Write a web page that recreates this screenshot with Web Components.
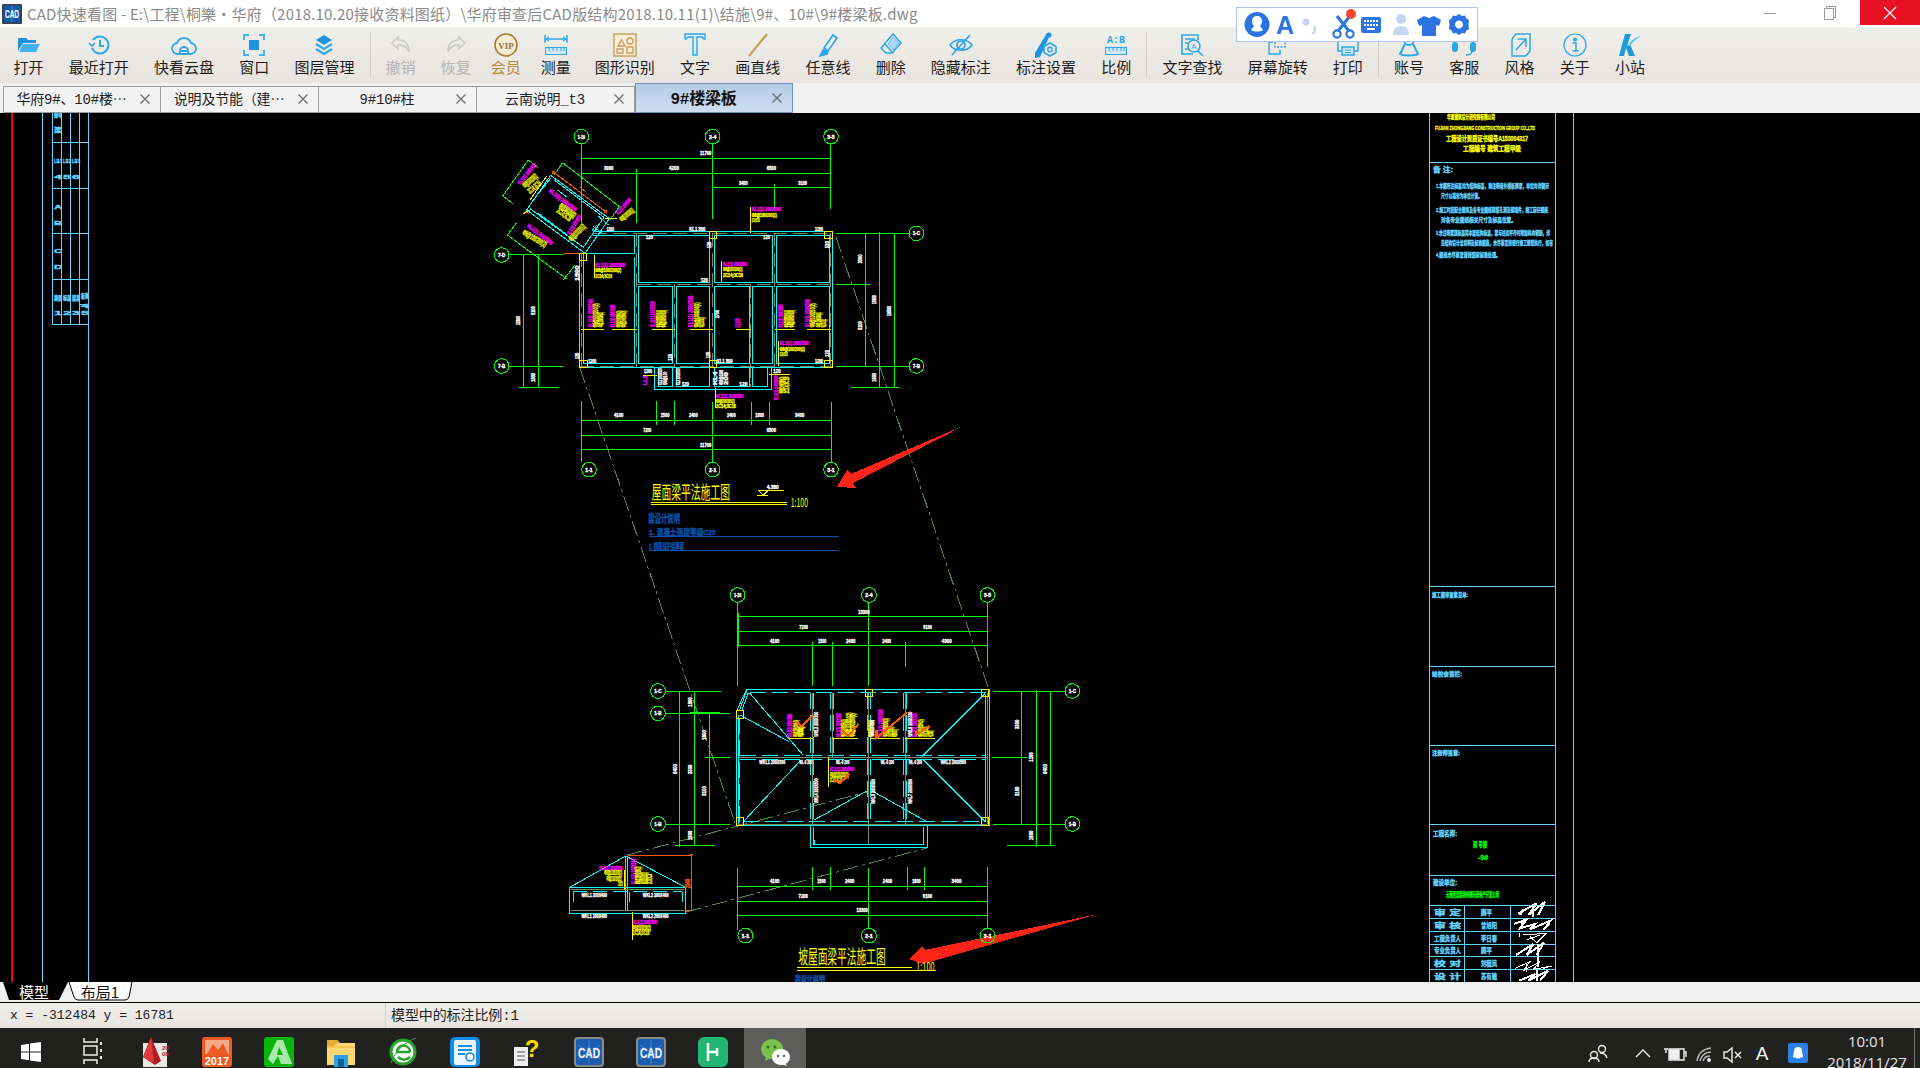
<!DOCTYPE html>
<html>
<head>
<meta charset="utf-8">
<title>CAD快速看图</title>
<style>
html, body { margin: 0; padding: 0; background: #000; overflow: hidden; }
</style>
</head>
<body>
<app-window></app-window>
<script>
const CJK = '"Noto Sans CJK SC", "Liberation Sans", sans-serif';

// small helper, every element here is just a template in an open shadow root
function comp(tag, markup) {
    const template = document.createElement('template');
    template.innerHTML = markup;
    customElements.define(tag, class extends HTMLElement {
        constructor() {
            super();
            this.attachShadow({ mode: 'open' });
            this.shadowRoot.appendChild(template.content.cloneNode(true));
        }
    });
}

comp('title-bar', `
    <style>
        :host { display: flex; align-items: center; height: 27px; background: #fff; position: relative; flex: none; }
        .logo { margin: 0 5px 0 2px; flex: none; }
        .name { font: 15px ${CJK}; color: #8a8a8a; white-space: nowrap; flex: 1; letter-spacing: 0.2px; }
        .btn { width: 60px; height: 25px; align-self: flex-start; display: flex; align-items: center; justify-content: center; flex: none; }
        .btn.close { background: #e81123; }
        .ime { position: absolute; left: 1236px; top: 7px; width: 240px; height: 33px; background: #fff; border: 1px solid #a9c6f2; z-index: 5; display: block; }
    </style>
    <svg class="logo" width="20" height="20" viewBox="0 0 20 20">
        <rect width="20" height="20" rx="1" fill="#3a3f46"/>
        <rect x="1.5" y="1.5" width="17" height="17" fill="#1358a8"/>
        <path d="M10 2v16M3 6l14 8M17 6L3 14" stroke="#3c86d0" fill="none"/>
        <text x="10" y="14" text-anchor="middle" font-family="Liberation Sans" font-weight="700" font-size="10" textLength="14" lengthAdjust="spacingAndGlyphs" fill="#fff">CAD</text>
    </svg>
    <div class="name">CAD快速看图 - E:\\工程\\桐樂·华府（2018.10.20接收资料图纸）\\华府审查后CAD版结构2018.10.11(1)\\结施\\9#、10#\\9#楼梁板.dwg</div>
    <div class="btn"><svg width="14" height="14"><path d="M1 7.5h12" stroke="#999"/></svg></div>
    <div class="btn"><svg width="14" height="16"><path d="M3.5 3.5V1.5h9v11h-2M1.5 3.5h9v11h-9z" stroke="#999" fill="#fff"/></svg></div>
    <div class="btn close"><svg width="14" height="14"><path d="M1 1l12 12M13 1L1 13" stroke="#fff" stroke-width="1.2"/></svg></div>
    <svg class="ime" viewBox="0 0 240 33">
        <circle cx="20" cy="16.500" r="12.500" fill="#2b74e2"/>
        <path fill="#fff" d="M20 8c3.500 0 5 2.500 5 5 0 2-1 4-2 5l3 4c-2 2-10 2-12 0l3-4c-1-1-2-3-2-5 0-2.500 1.500-5 5-5z"/>
        <text x="39" y="26" font-family="Liberation Sans" font-weight="700" font-size="25" fill="#2b74e2">A</text>
        <circle cx="69" cy="14" r="3.5" fill="#c3d7f5"/><path d="M77 18c2 3 1 6-2 8" stroke="#c3d7f5" stroke-width="2.5" fill="none"/>
        <circle cx="100" cy="26" r="3.6" fill="none" stroke="#2b74e2" stroke-width="2.2"/><circle cx="113" cy="26" r="3.6" fill="none" stroke="#2b74e2" stroke-width="2.2"/>
        <path d="M101 23L113 8M112 23L100 8" stroke="#2b74e2" stroke-width="3"/>
        <circle cx="114" cy="6" r="5" fill="#f4492e"/>
        <rect x="124" y="9" width="20" height="16" rx="2" fill="#2b74e2"/>
        <path d="M127 13h14M127 17h14" stroke="#fff" stroke-width="2" stroke-dasharray="2 1"/><path d="M130 21h8" stroke="#fff" stroke-width="2"/>
        <circle cx="164" cy="11" r="5" fill="#c3d7f5"/><path d="M156 27c0-6 3-9 8-9s8 3 8 9z" fill="#c3d7f5"/>
        <path fill="#2b74e2" d="M187 8l5 2 5-2 7 4-2 6-3-1v11h-14V17l-3 1-2-6z"/>
        <path fill="#2b74e2" fill-rule="evenodd" d="M222 6l3 2 3-.500 1.500 3 2.500 1.500-.500 4.500.500 4.500-2.500 1.500-1.500 3-3-.500-3 2-3-2-3 .500-1.500-3-2.500-1.500.500-4.500-.500-4.500 2.500-1.500 1.500-3 3 .500zM222 12.500a4 4 0 1 0 .01 0z"/>
    </svg>
`);

comp('tool-item', `
    <style>
        :host { display: flex; flex-direction: column; align-items: center; padding: 5px 12.6px 0; font: 15px/20px ${CJK}; color: #1c1c1c; white-space: nowrap; flex: none; }
        :host([off]) { color: #b4b4b4; }
        :host([gold]) { color: #b88a3e; padding: 5px 10px 0 7.4px; }
        :host([tight]) { padding: 5px 11.400px 0 10px; }
        .ico { height: 25px; display: flex; align-items: center; justify-content: center; }
    </style>
    <div class="ico"><slot></slot></div>
    <slot name="label"></slot>
`);

comp('tool-sep', `
    <style>
        :host { display: block; width: 1px; height: 46px; margin: 5px 2.500px 0; background: #cfcdc9; flex: none; }
    </style>
`);

const B = '#2ea6e8';
comp('tool-bar', `
    <style>
        :host { display: flex; height: 56px; padding-left: 1px; background: linear-gradient(#efefeb, #e8e3de); flex: none; }
    </style>
    <tool-item><svg width="22" height="16" viewBox="0 0 22 16"><path fill="#1f93de" d="M0 1h8l2 2h8v3H5L0 14z"/><path fill="#43b2f2" d="M5 7h17l-4 8H1z"/></svg><span slot="label">打开</span></tool-item>
    <tool-item><svg width="22" height="22" viewBox="0 0 22 22" fill="none" stroke="${B}" stroke-width="2"><path d="M5 6a8.500 8.500 0 1 1-1 8"/><path d="M12 6v6h4"/><path d="M1 9l3 3 3-3" stroke-width="1.600"/></svg><span slot="label">最近打开</span></tool-item>
    <tool-item><svg width="26" height="22" viewBox="0 0 26 22" fill="none" stroke="${B}" stroke-width="1.800"><path d="M7 20a5.500 5.500 0 0 1-1-11A7.500 7.500 0 0 1 20 9a5.500 5.500 0 0 1-1 11z"/><path d="M9 20v-3a4 4 0 0 1 8 0v3M9 17h8"/></svg><span slot="label">快看云盘</span></tool-item>
    <tool-item><svg width="22" height="22" viewBox="0 0 22 22"><rect x="6" y="6" width="10" height="10" fill="#1f93de"/><path d="M1 6V1h5M16 1h5v5M21 16v5h-5M6 21H1v-5" fill="none" stroke="#43b2f2" stroke-width="2"/></svg><span slot="label">窗口</span></tool-item>
    <tool-item><svg width="20" height="22" viewBox="0 0 20 22"><path fill="#1f93de" d="M10 1l8 5-8 5-8-5z"/><path d="M2 10l8 5 8-5M2 15l8 5 8-5" fill="none" stroke="#2ea6e8" stroke-width="2.200"/></svg><span slot="label">图层管理</span></tool-item>
    <tool-sep></tool-sep>
    <tool-item off><svg width="22" height="20" viewBox="0 0 22 20"><path d="M8 2L2 8l6 6v-4c5 0 8 1 11 7 0-8-4-12-11-12z" fill="none" stroke="#c9c9c9" stroke-width="1.500"/></svg><span slot="label">撤销</span></tool-item>
    <tool-item off><svg width="22" height="20" viewBox="0 0 22 20"><path d="M14 2l6 6-6 6v-4c-5 0-8 1-11 7 0-8 4-12 11-12z" fill="none" stroke="#c9c9c9" stroke-width="1.500"/></svg><span slot="label">恢复</span></tool-item>
    <tool-item gold><svg width="24" height="24" viewBox="0 0 24 24"><circle cx="12" cy="12" r="11" fill="#f6ecd6" stroke="#a87c2e" stroke-width="1.600"/><text x="12" y="15.500" text-anchor="middle" font-family="Liberation Serif" font-weight="700" font-size="9" fill="#9c7226">VIP</text></svg><span slot="label">会员</span></tool-item>
    <tool-item tight><svg width="24" height="22" viewBox="0 0 24 22" fill="none" stroke="${B}"><path d="M1 1v8M23 1v8M2 5h20" stroke-width="1.400"/><path d="M5 3L2 5l3 2M19 3l3 2-3 2" stroke-width="1.200"/><rect x="1.500" y="13.500" width="21" height="7" fill="#cfe8f7"/><path d="M5 14v3M9 14v3M13 14v3M17 14v3M20 14v3"/></svg><span slot="label">测量</span></tool-item>
    <tool-item><svg width="24" height="24" viewBox="0 0 24 24" fill="none" stroke="#c59f5c" stroke-width="1.400"><rect x="1" y="1" width="22" height="22" fill="#f7edd9"/><path d="M5 13l3.500-6 3.500 6z"/><circle cx="17" cy="8" r="3"/><rect x="14" y="14" width="6" height="6"/><rect x="4" y="16" width="6" height="4"/></svg><span slot="label">图形识别</span></tool-item>
    <tool-item><svg width="22" height="24" viewBox="0 0 22 24"><path d="M1 1h20v5h-1l-2-2h-5v18h-4V4H4L2 6H1z" fill="#d8f0fc" stroke="${B}" stroke-width="1.400"/></svg><span slot="label">文字</span></tool-item>
    <tool-item><svg width="20" height="24" viewBox="0 0 20 24"><path d="M1 23L19 1" stroke="#c49b52" stroke-width="2"/></svg><span slot="label">画直线</span></tool-item>
    <tool-item><svg width="20" height="24" viewBox="0 0 20 24" fill="none" stroke="${B}" stroke-width="1.600"><path d="M6 15L15 2l4 3-9 13z"/><path d="M5 17l-3 6 7-2 1-3z" fill="${B}"/></svg><span slot="label">任意线</span></tool-item>
    <tool-item><svg width="22" height="24" viewBox="0 0 22 24" fill="none" stroke="${B}" stroke-width="1.500"><path d="M13 1l8 9-9 10H6l-5-5z"/><path d="M5 11l8 9"/><path d="M13 4l6 6-6 7-5-6z" fill="#a9d9f3" stroke-width=".6"/></svg><span slot="label">删除</span></tool-item>
    <tool-item><svg width="24" height="22" viewBox="0 0 24 22" fill="none" stroke="${B}" stroke-width="1.700"><path d="M1 11c5-7 17-7 22 0-5 7-17 7-22 0z"/><circle cx="12" cy="11" r="4"/><path d="M3 21L21 1"/></svg><span slot="label">隐藏标注</span></tool-item>
    <tool-item><svg width="24" height="26" viewBox="0 0 24 26"><path fill="#1f93de" d="M13 1l3 2L6 25l-5 1 0-5z"/><circle cx="15" cy="3" r="2.500" fill="#1f93de"/><path d="M16 11l6 3.500v6L16 24l-6-3.500v-6z" fill="none" stroke="${B}" stroke-width="1.600"/><circle cx="16" cy="17.500" r="2.200" fill="none" stroke="${B}" stroke-width="1.400"/></svg><span slot="label">标注设置</span></tool-item>
    <tool-item><svg width="24" height="24" viewBox="0 0 24 24" fill="none" stroke="${B}"><text x="12" y="10" text-anchor="middle" font-family="Liberation Mono" font-weight="700" font-size="10" fill="${B}" stroke="none">A:B</text><rect x="1.500" y="14.500" width="21" height="7" fill="#cfe8f7"/><path d="M5 15v3M9 15v3M13 15v3M17 15v3M20 15v3"/></svg><span slot="label">比例</span></tool-item>
    <tool-sep></tool-sep>
    <tool-item><svg width="24" height="24" viewBox="0 0 24 24" fill="none" stroke="${B}" stroke-width="1.600"><path d="M18 7V2H2v19h11"/><path d="M5 6h10M5 10h3M5 16h3"/><circle cx="14" cy="13" r="6"/><path d="M18 18l5 5"/><text x="14" y="16" text-anchor="middle" font-family="Liberation Sans" font-size="8" fill="${B}" stroke="none">A</text></svg><span slot="label">文字查找</span></tool-item>
    <tool-item><svg width="24" height="24" viewBox="0 0 24 24" fill="none" stroke="${B}" stroke-width="1.400"><path d="M7 9H3v12h11v-4"/><path d="M9 2h10v12H9z" stroke-dasharray="2 1.500"/></svg><span slot="label">屏幕旋转</span></tool-item>
    <tool-item><svg width="24" height="24" viewBox="0 0 24 24" fill="none" stroke="${B}" stroke-width="1.500"><path d="M6 8V2h12v6"/><path d="M5 18H2V8h20v10h-3"/><rect x="6" y="14" width="12" height="8" fill="#cfe8f7"/><path d="M9 17h6M9 19.500h6" stroke-width="1"/></svg><span slot="label">打印</span></tool-item>
    <tool-sep></tool-sep>
    <tool-item><svg width="22" height="24" viewBox="0 0 22 24" fill="none" stroke="${B}" stroke-width="2"><circle cx="11" cy="7" r="5"/><path d="M7 11L2 21c3 2 15 2 18 0l-5-10"/></svg><span slot="label">账号</span></tool-item>
    <tool-item><svg width="24" height="24" viewBox="0 0 24 24" fill="none" stroke="${B}" stroke-width="2"><path d="M3 15V10a9 9 0 0 1 18 0v5"/><rect x="1" y="10" width="4" height="8" rx="2" fill="${B}"/><rect x="19" y="10" width="4" height="8" rx="2" fill="${B}"/><path d="M20 18c0 3-3 4-6 4" stroke-width="1.500"/></svg><span slot="label">客服</span></tool-item>
    <tool-item><svg width="24" height="24" viewBox="0 0 24 24" fill="none" stroke="${B}" stroke-width="1.500"><path d="M5 6v17h14"/><path d="M5 6L9 1h14v17l-4 5"/><path d="M9 17L19 6M11 6h8v8"/></svg><span slot="label">风格</span></tool-item>
    <tool-item><svg width="24" height="24" viewBox="0 0 24 24" fill="none" stroke="${B}" stroke-width="1.200"><circle cx="12" cy="12" r="11"/><circle cx="12" cy="6.500" r="1.400" fill="${B}"/><path d="M9.500 10H13v8M9.500 18h6" stroke-width="1.500"/></svg><span slot="label">关于</span></tool-item>
    <tool-item><svg width="22" height="24" viewBox="0 0 22 24"><path fill="#1d9ad8" d="M6 1h6L8 13l3-2 5 12h-6l-3-8-2 8H0z"/><path fill="#63c8f2" d="M9 13C12 7 16 4 22 3c-5 3-8 6-11 10z"/></svg><span slot="label">小站</span></tool-item>
`);

comp('doc-tab', `
    <style>
        :host { display: flex; align-items: center; box-sizing: border-box; width: 158px; height: 27px; margin-top: 3px; padding: 0 9px 3px 0; background: #f2f2f2; border: 1px solid #9b9b9b; border-width: 1px 1px 1px 0; font: 14px "Liberation Mono", ${CJK}; color: #222; flex: none; }
        :host([first]) { border-left-width: 1px; }
        :host([active]) { height: 30px; margin-top: 0; background: linear-gradient(#b4cbe6, #cfdef0); border: 1px solid #6f94c4; font-size: 16px; font-weight: 700; color: #111; }
        .t { flex: 1; text-align: center; white-space: nowrap; letter-spacing: -0.2px; }
        svg { margin-top: 2px; }
    </style>
    <div class="t"><slot></slot></div>
    <svg width="12" height="12"><path d="M1.500 1.500l9 9M10.500 1.500l-9 9" stroke="#6b6b6b" stroke-width="1.200"/></svg>
`);

comp('tab-strip', `
    <style>
        :host { display: flex; height: 30px; padding-left: 3px; background: #f0f0f0; flex: none; }
    </style>
    <doc-tab first>华府9#、10#楼⋯</doc-tab>
    <doc-tab>说明及节能（建⋯</doc-tab>
    <doc-tab>9#10#柱</doc-tab>
    <doc-tab>云南说明_t3</doc-tab>
    <doc-tab active>9#楼梁板</doc-tab>
`);

// drawing text helpers: x, y, string, colour, length, size, rotation
const T = (x, y, s, c, len, size = 17, rot = 0) =>
    `<text x="${x}" y="${y}" fill="${c}" stroke="${c}" font-size="${size}"${len ? ` textLength="${len}" lengthAdjust="spacingAndGlyphs"` : ''}${rot ? ` transform="rotate(${rot} ${x} ${y})"` : ''}>${s}</text>`;
const V = (x, y, s, c, len, size = 17) => T(x, y, s, c, len, size, -90);
const W = '#fff', Y = '#ff0', M = '#f0f', G = '#0f0', C = '#0ff', O = '#ff5a00', L = '#66d4ff', K = '#0a50a8';
const ring = (list) => list.map(p => `<circle cx="${p[0]}" cy="${p[1]}" r="22"/>`).join('');
const box = (list) => list.map(p => `<rect x="${p[0]}" y="${p[1]}" width="22" height="22"/>`).join('');
const bubbleText = (list) => list.map(p => T(p[0] - 11, p[1] + 6, p[2], W, 22, 15)).join('');
const beam = 'KL1(1) 200X500', rebar = 'Φ8@100/200(2)', bars = '2C14;3C16';
// a reinforcement stack: magenta label then yellow rows, all standing upright
const stack = (x, yb, rows) => rows.map((r, i) => V(x + i * 16, yb, i ? rebar : beam, i ? Y : M, r, i ? 22 : 20)).join('');

const plan1 = `<g class="z" transform="translate(480 110) scale(.33333)">
    <g stroke="${G}">${ring([[304,80],[698,80],[1053,80],[65,435],[65,768],[1309,370],[1309,768]])}
        <path d="M304 145H1053M304 190H1053M697 232H1053M304 102V340M697 102V326M1053 102V296M470 178V340M883 222V296"/>
        <path d="M88 435H250M88 769H250M118 832H236M130 435V832M175 435V835"/>
        <path d="M1068 370H1287M1068 769H1287M1068 523H1170M1113 832H1256M1156 370V769M1198 365V832M1243 370V832"/>
        <path d="M145 150L68 258L98 280M145 150L175 175M248 158L418 290L390 330M248 158L222 195M82 375L110 338M82 375L262 508M250 510L285 465"/>
    </g>
    <g stroke="#7d8a62"><path d="M340 370H1058M300 770H1056M470 370V770M697 370V770M883 370V770M1053 370V770M470 523H1053M583 523V770M813 523V830M305 430V770" stroke-dasharray="14 6"/></g>
    <g stroke="${C}">
        <path d="M338 364H1058V772H298V430"/><path d="M338 376H465V430H310V760H465V440M475 376H690V518H475zM704 376H878V518H704zM889 376H1048V518H889z"/>
        <path d="M475 530H578V760H475zM589 530H690V760H589zM704 530H808V760H704zM817 530H878V760H817zM889 530H1048V760H889z"/>
        <path d="M523 772V838H875V772M535 772V830H578V772M589 772V830H690V772M704 772V830H808V772M817 772V830H863V772"/>
        <path d="M212 196L388 326L315 430L140 300zM222 210L372 322L310 412L150 296M158 272L212 205M175 310L310 412M232 240L262 262M340 350L370 372M336 362L350 345M355 318L385 345"/>
    </g>
    <g stroke="${O}"><path d="M222 188L376 304M300 232L318 246M252 432H300"/><rect x="219" y="185" width="6" height="6"/><rect x="373" y="301" width="6" height="6"/><path d="M134 302L148 312"/></g>
    <g stroke="${Y}">${box([[299,430],[688,364],[1035,364],[300,751],[688,751],[1035,751]])}
        <path d="M811 292V370M724 454V520M343 436V504M895 693V768M304 658H372M396 658H470M516 658H584M630 658H698M768 658H812M886 658H945M981 658H1053M706 835V895M868 793H930M490 796H530M200 198L150 270M375 325L412 325M128 312L150 300"/>
    </g>
    ${stack(338,652,[85,72,46])}${stack(406,652,[68,50,50])}${stack(526,652,[78,52,52])}${stack(640,652,[95,75,30])}${V(780,652,beam,M,28,20)}${stack(910,652,[68,52,52])}${stack(990,652,[85,72,46,25])}
    ${T(815,303,beam,M,88)}${T(815,320,rebar,Y,76)}${T(815,336,bars,Y,24)}
    ${T(729,467,beam,M,72)}${T(729,484,rebar,Y,58)}${T(729,500,bars,Y,60)}
    ${T(346,470,beam,M,90)}${T(346,486,rebar,Y,78)}${T(346,503,bars,Y,50)}
    ${T(899,705,beam,M,88)}${T(899,722,rebar,Y,76)}${T(899,738,bars,Y,24)}
    ${T(708,863,beam,M,82)}${T(708,880,rebar,Y,56)}${T(708,895,bars,Y,60)}
    ${T(205,245,beam,M,100,17,37)}${T(235,290,rebar,Y,58,24,37)}${T(228,305,bars,Y,50,24,37)}
    ${T(120,225,beam,M,78,17,-50)}${T(135,235,rebar,Y,52,24,-40)}${T(150,252,bars,Y,46,24,-40)}
    ${T(415,315,beam,M,60,17,-48)}${T(425,335,rebar,Y,50,22,-38)}
    ${T(140,350,beam,M,92,17,37)}${T(125,372,rebar,Y,80,24,30)}
    ${T(270,375,beam,M,66,17,-58)}${T(275,395,rebar,Y,62,24,-45)}
    ${T(372,181,'3900',W,28)}${T(567,181,'4200',W,30)}${T(860,181,'6500',W,28)}${T(777,225,'3400',W,26)}${T(955,225,'3100',W,26)}${T(660,136,'11700',W,34)}
    ${T(380,362,'1200',W,22)}${T(628,362,'KL1 300',W,48)}${T(1005,362,'1200',W,24)}${T(497,388,'120',W,22)}${T(850,388,'120',W,20)}${T(662,515,'120',W,22)}${T(325,758,'1200',W,24)}${T(710,758,'KL1 300',W,48)}${T(1005,758,'1200',W,24)}
    ${V(692,415,'120',W,20)}${V(1046,415,'120',W,22)}${V(716,625,'2700',W,25)}${V(1046,740,'120',W,20)}${V(577,752,'120',W,20)}${V(691,745,'120',W,20)}${V(297,512,'1500',W,46)}${V(297,748,'120',W,20)}
    ${V(120,645,'12900',W,26)}${V(165,615,'5100',W,26)}${V(165,815,'1800',W,26)}${V(1146,460,'3300',W,26)}${V(1188,582,'13800',W,26)}${V(1146,660,'5100',W,26)}${V(1234,618,'16500',W,30)}${V(1188,815,'1800',W,26)}
    ${V(545,825,'KL2 200X500',W,50,18)}${V(560,825,'Φ8@100',W,40,18)}${V(600,825,'KL3 200X500',W,50,18)}${V(712,825,'KL4',W,40,18)}${V(728,825,'Φ8@100',W,45,18)}${V(745,825,'200',W,40,18)}${T(605,828,'120',W,22)}${T(778,828,'120',W,24)}
    ${V(500,825,'LL1',M,28)}${T(492,788,'1200',W,24)}${V(895,870,beam,M,74)}${V(912,850,rebar,Y,50,20)}${V(928,850,bars,Y,50,20)}${T(880,788,'120',W,22)}
    ${bubbleText([[304,80,'1-10'],[698,80,'2-4'],[1053,80,'3-5'],[65,435,'7-D'],[65,768,'7-B'],[1309,370,'1-C'],[1309,768,'7-B']])}
</g>`;

const plan1b = `<g class="z" transform="translate(540 380) scale(.33333)">
    <g stroke="${G}">${ring([[147,269],[518,269],[873,269]])}
        <path d="M124 121H875M124 166H875M124 208H875M124 64V245M349 64V135M403 64V135M517 66V245M634 66V135M688 66V135M874 66V245"/>
        <path d="M0 22H57M934 22H1076"/>
    </g>
    ${T(222,112,'4100',W,28)}${T(362,112,'1500',W,26)}${T(447,112,'2400',W,26)}${T(561,112,'2400',W,26)}${T(646,112,'1800',W,26)}${T(765,112,'3400',W,28)}${T(310,157,'7200',W,24)}${T(680,157,'6500',W,28)}${T(480,200,'11700',W,34)}
    ${bubbleText([[147,269,'1-1'],[518,269,'2-1'],[873,269,'3-1']])}
    <g class="thin">${T(335,358,'屋面梁平法施工图',Y,235,56)}</g>
    <g stroke="${Y}"><path d="M333 367H740M333 375H740M655 331H732M655 331L670 345L685 331M652 346H685"/></g>
    ${T(680,328,'4.380',W,36,18)}
    <g class="thin">${T(752,380,'1:100',Y,52,38)}</g>
    ${T(325,430,'梁设计说明',K,95,34)}${T(327,466,'1. 混凝土强度等级C25',K,200,24)}${T(327,508,'2. 钢筋保护层厚度',K,105,24)}
    <g stroke="${K}"><path d="M327 469H897M327 511H897"/></g>
</g>`;

const plan2 = `<g class="z" transform="translate(640 580) scale(.33333)">
    <g stroke="${G}">${ring([[293,45],[687,45],[1042,45],[54,333],[54,400],[54,732],[1297,333],[1297,732]])}
        <path d="M293 110H1042M293 155H1042M293 197H1042M293 67V318M295 100V200M687 67V318M1042 67V262M517 186V318M577 186V318M796 186V262"/>
        <path d="M78 334H242M78 400H270M78 733H270M106 797H225M118 334V800M163 334V797M208 400V733M150 397H240M150 399H240M195 532H270"/>
        <path d="M1058 334H1276M1058 733H1276M1056 532H1160M1102 796H1245M1144 334V733M1189 330V800M1232 334V796"/>
    </g>
    <g stroke="#7d8a62"><path d="M293 733H1042M1042 340V733M293 532H1042M517 340V733M577 340V532M687 340V795M796 340V733"/></g>
    <g stroke="${C}">
        <path d="M320 328H1048V738H290V392z"/><path d="M296 405V733M1037 345V725M298 392L320 332M305 392L325 338"/>
        <path d="M330 338H1037M300 526H1037M300 538H1037M310 725H1037M300 415V725M512 340V725M522 340V725M572 340V526M582 340V526M682 340V725M692 340V725M790 340V725M800 340V725" stroke-dasharray="16 6"/>
        <path d="M328 338L490 526M300 405L447 485M310 725L483 540M1035 340L845 530M850 540L1035 725M522 720L682 632M695 632L860 725"/>
        <path d="M511 738V803H863V738M522 742V795H852V742"/>
    </g>
    <g stroke="${Y}">${box([[289,393],[676,328],[1025,328],[289,714],[1025,714]])}
        <path d="M447 475H518M577 475H655M690 475H780M796 475H885M565 532V620"/></g>
    ${stack(457,470,[68,50,30])}${stack(602,470,[70,52,72])}${stack(728,470,[82,55,30])}${stack(832,470,[70,52,30])}
    ${V(488,470,rebar,Y,30,22)}${V(645,470,rebar,Y,70,22)}${V(700,470,rebar,Y,50,22)}${V(770,470,rebar,Y,22,22)}${V(880,470,rebar,Y,18,22)}
    ${T(570,573,beam,M,72)}${T(570,590,rebar,Y,56,22)}${T(570,606,bars,Y,36,22)}
    <g fill="none" stroke="${O}"><path class="o" d="M470 425L485 440L520 405M605 450L625 468L655 432M828 452V465L868 438M580 598L600 610L628 582"/><path class="o" d="M708 450V475L800 398M712 450V478"/></g>
    ${T(655,101,'13300',W,34)}${T(478,146,'7200',W,26)}${T(850,146,'6100',W,26)}${T(390,188,'4100',W,28)}${T(535,188,'1500',W,24)}${T(618,188,'2400',W,28)}${T(727,188,'2400',W,26)}${T(905,188,'4300',W,30)}
    ${T(358,551,'WKL1 200X500',W,78)}${T(478,551,'WL-0 200',W,38)}${T(588,551,'WL-0 200',W,40)}${T(722,551,'WL-0 200',W,40)}${T(806,551,'WL-0 200',W,40)}${T(902,551,'WKL2 200X500',W,76)}
    ${V(534,470,'WKL3 200X500',W,75)}${V(534,670,'WKL4 200X500',W,75)}${V(705,672,'WKL5 200X500',W,75)}${V(703,470,'WKL3 200',W,50)}${V(815,470,'WKL6 200X500',W,75)}${V(815,672,'WKL7 200X500',W,75)}
    ${V(155,380,'1800',W,28)}${V(155,780,'1800',W,28)}${V(112,582,'6400',W,30)}${V(155,582,'3300',W,28)}${V(198,480,'1800',W,30)}${V(198,648,'3100',W,30)}${V(1136,447,'3300',W,28)}${V(1136,648,'3100',W,28)}${V(1180,545,'1200',W,28)}${V(1222,582,'6400',W,30)}${V(1180,780,'1800',W,28)}
    ${bubbleText([[293,45,'1-10'],[687,45,'2-4'],[1042,45,'3-5'],[54,333,'1-C'],[54,400,'1-B'],[54,732,'1-B'],[1297,333,'1-C'],[1297,732,'1-B']])}
</g>`;

const plan3 = `<g class="z" transform="translate(550 840) scale(.35714 .33333)">
    <g stroke="${G}"><path d="M350 16H462M1280 16H1414M362 0V18M405 0V14M1362 0V18"/>
        ${[[547,287],[893,287],[1225,287]].map(p => `<ellipse cx="${p[0]}" cy="${p[1]}" rx="21" ry="22"/>`).join('')}
        <path d="M526 85V270M735 82V150M785 82V150M893 85V265M1000 82V150M1050 82V150M1224 82V265M526 140H1224M526 184H1224M526 226H1224"/></g>
    <g stroke="${C}"><path d="M730 0V22H1056V0M742 0V14H1045V0"/>
        <path d="M55 142L212 48L380 142M55 142V220H380V142zM212 48V142M218 48V142M212 142V210M218 142V210"/>
        <path d="M65 155V205M372 155V205M222 155V205" stroke-dasharray="10 6"/><path d="M65 154H370" stroke-dasharray="14 6"/></g>
    <g stroke="#7d8a62"><path d="M60 212H375M60 148H375"/></g>
    <g stroke="${O}"><path d="M218 48H397V212M380 212H397M392 44H400"/></g>
    <g stroke="${Y}"><path d="M208 90V150M232 215V300M692 382H1015M692 391H1080"/></g>
    ${T(138,90,beam,M,66)}${T(152,105,rebar,Y,50,20)}${T(158,122,rebar,Y,42,20)}${T(190,138,bars,Y,14,20)}
    ${V(240,132,beam,M,76,22)}${V(255,132,rebar,Y,52,24)}${V(272,132,rebar,Y,36,24)}${V(285,132,bars,Y,30,24)}
    ${T(232,253,beam,M,68)}${T(232,270,rebar,Y,50,20)}${T(232,286,bars,Y,46,20)}
    ${V(393,145,'2340',O,28,20)}
    ${T(88,170,'WKL1 200X400',W,72)}${T(260,170,'WKL2 200X400',W,72)}${T(88,235,'WKL1 200X400',W,72)}${T(260,235,'WKL2 200X400',W,72)}
    ${T(616,130,'4100',W,26)}${T(748,130,'1500',W,24)}${T(826,130,'2400',W,26)}${T(932,130,'2400',W,26)}${T(1014,130,'1800',W,24)}${T(1124,130,'3400',W,28)}${T(696,175,'7200',W,26)}${T(1044,175,'6100',W,26)}${T(858,217,'13300',W,32)}
    ${bubbleText([[547,287,'1-1'],[893,287,'2-1'],[1225,287,'3-1']])}
    <g class="thin">${T(695,372,'坡屋面梁平法施工图',Y,245,58)}${T(1025,393,'1:100',Y,52,36)}</g>
    ${T(685,424,'梁设计说明',K,85,20)}
</g>`;

const arrows = `
    <g stroke="#4a8a4a" stroke-dasharray="16 4 3 4" fill="none">
        <path d="M580 368L735 823M836 237L989 690M627 855L867 792M686 912L927 848"/>
    </g>
    <polygon fill="#ff2318" points="965,425 853,483 856,488 837,487 847,470 851,474"/>
    <polygon fill="#ff2318" points="1098,914 926,963 923,964 909,959 922,947 925,950"/>`;

const sideLeft = `<g class="f"><g stroke="#ff0000"><path class="o" d="M12 113V982"/></g>
    <g stroke="${L}"><path d="M42 113V982M88 113V982M52 113V324H88M61 113V324M70 113V324M79 113V324M52 142H88M52 188H88M52 233H88M52 279H88M79 304H88"/></g>
    ${T(54,117,'编号',L,8,6)}${T(54,132,'梁',L,8,6)}${T(54,163,'LB1',L,8,6)}${T(63,163,'LB2',L,8,6)}${T(72,163,'LB3',L,8,6)}${T(54,179,'4',L,8,6)}${T(63,179,'5',L,8,6)}${T(72,179,'6',L,8,6)}${T(54,209,'A',L,8,6)}${T(54,225,'B',L,8,6)}${T(54,253,'C',L,8,6)}${T(54,269,'D',L,8,6)}${T(54,300,'屋面',L,8,6)}${T(63,300,'标高',L,8,6)}${T(72,300,'层高',L,8,6)}${T(81,298,'板厚',L,8,6)}${T(54,315,'1',L,8,6)}${T(63,315,'2',L,8,6)}${T(72,315,'3',L,8,6)}${T(81,308,'4',L,8,6)}${T(81,315,'5',L,8,6)}</g>`;

const titleBlock = `<g class="f">
    <g stroke="${L}"><path d="M1429 113V982M1555 113V982M1573 113V982M1429 162H1555M1429 586H1555M1429 666H1555M1429 745H1555M1429 824H1555M1429 875H1555M1429 905H1555M1429 918H1555M1429 931H1555M1429 944H1555M1429 956H1555M1429 969H1555M1464 905V982M1510 905V982"/></g>
    ${T(1447,119,'华夏建筑设计研究院有限公司',Y,48,6)}${T(1435,130,'FUJIAN ZHONGJIANG CONSTRUCTION GROUP CO.,LTD',Y,100,6)}${T(1446,141,'工程设计资质证书编号A153004317',Y,82,7)}${T(1463,151,'工程编号 建筑工程甲级',Y,58,7)}
    ${T(1433,172,'备   注:',L,20,7)}
    ${T(1436,188,'1.本图所注标高均为结构标高，除注明者外楼板厚度，单位均详图示',L,113,6)}${T(1441,198,'尺寸以毫米为单位计算。',L,41,6)}
    ${T(1436,212,'2.施工时应配合建筑及各专业图纸预留孔洞及预埋件，施工前仔细核',L,112,6)}${T(1441,222,'对各专业图纸相关尺寸及标高位置。',L,75,6)}
    ${T(1436,235,'3.未注明梁顶标高同本层结构标高，梁与柱边平齐时附加纵向钢筋，详',L,114,6)}${T(1441,245,'见结构设计总说明及标准图集，未尽事宜按现行施工规范执行，如有',L,112,6)}
    ${T(1436,257,'4.图纸未尽事宜请按国家标准处理。',L,64,6)}
    ${T(1432,597,'施工图审查意见单:',L,36,6)}${T(1432,676,'绘校会签栏:',L,30,6)}${T(1432,755,'注册师签章:',L,28,6)}
    ${T(1433,836,'工程名称:',L,24,7)}${T(1473,847,'周 号楼',G,14,7)}${T(1478,860,'-9#',G,10,7)}${T(1433,885,'建设单位:',L,24,7)}${T(1446,897,'云南西双版纳州桐乐房地产开发公司',G,53,7)}
    ${[['审  定','顾平',915],['审  核','曾旭阳',928],['工程负责人','李日春',941],['专业负责人','顾平',953],['校  对','刘程凤',966],['设  计','苏有建',979]].map(r => T(1434, r[2], r[0], L, r[0].length > 3 ? 27 : 20, 7) + T(1481, r[2], r[1], L, r[1].length > 2 ? 16 : 11, 7)).join('')}
    <g transform="translate(1420 820) scale(.33333)" stroke="${W}" fill="none">
        <path class="o" d="M295 280L350 250L325 285L375 245L355 285M310 270L300 285M340 260V290"/>
        <path class="o" d="M282 312L320 298L300 325L345 312L330 328L392 302L370 330L390 310M305 300V328"/>
        <path d="M298 338V352M310 345L378 340L350 368L330 350M320 360L360 345"/>
        <path class="o" d="M288 405L340 372L320 405L372 368L350 405M355 372V440"/>
        <path d="M285 445L330 425L310 452L360 425L340 448L395 438L370 445M320 430V455"/>
        <path class="o" d="M298 482L345 462L325 482L385 452L360 482M350 450V482"/>
    </g></g>`;

comp('cad-canvas', `
    <style>
        :host { display: block; flex: none; width: 1920px; height: 869px; background: #000; overflow: hidden; }
        svg { display: block; shape-rendering: crispEdges; font-family: "Liberation Sans", "Noto Sans CJK SC", sans-serif; font-weight: 700; }
        path, circle, rect, ellipse { fill: none; stroke-width: 1; vector-effect: non-scaling-stroke; }
        path.o { stroke-width: 2; }
        .z text { stroke-width: 1.200; }
        .f text { stroke-width: .35; }
        .z .thin text { stroke-width: 0; font-weight: 400; font-family: "Noto Sans CJK SC", sans-serif; }
    </style>
    <svg width="1920" height="869" viewBox="0 113 1920 869">
        ${arrows}${sideLeft}${plan1}${plan1b}${plan2}${plan3}${titleBlock}
    </svg>
`);

comp('layout-tabs', `
    <style>
        :host { display: flex; height: 20px; background: #f0f0f0; border-bottom: 1px solid #000; position: relative; flex: none; font: 15px/19px ${CJK}; }
        .tab { width: 66px; height: 19px; position: relative; text-align: center; flex: none; }
        .tab svg { position: absolute; left: 0; top: 0; }
        .tab span { position: relative; }
    </style>
    <div class="tab" style="margin-left:1px;color:#fff">
        <svg width="70" height="19"><path d="M2 0L8 18H58L67 0z" fill="#000"/></svg><span>模型</span>
    </div>
    <div class="tab" style="color:#111">
        <svg width="66" height="19"><path d="M2 0L7 15Q8 18 11 18H58Q61 18 62 15L65 0" fill="#fff" stroke="#000"/></svg><span>布局1</span>
    </div>
`);

comp('status-bar', `
    <style>
        :host { display: flex; height: 25px; background: linear-gradient(#f0efeb, #e8e3de); font: 13px/26px "Liberation Mono", ${CJK}; color: #222; flex: none; }
        .xy { width: 375px; padding-left: 10px; }
        .msg { border-left: 1px solid #d4d2ce; padding-left: 5px; font-size: 14px; letter-spacing: -0.1px; }
    </style>
    <div class="xy">x = -312484 y = 16781</div>
    <div class="msg">模型中的标注比例:1</div>
`);

comp('task-cell', `
    <style>
        :host { display: flex; width: 62px; height: 40px; padding-top: 9px; box-sizing: border-box; justify-content: center; flex: none; }
        :host([on]) { background: #5d5d5b; }
    </style>
    <slot></slot>
`);

const cadLogo = () => `<svg width="30" height="30" viewBox="0 0 30 30"><rect width="30" height="30" rx="4" fill="#8a8a8a"/><rect x="2" y="2" width="26" height="26" rx="2" fill="#1a5cad"/><path d="M15 3v24M4 8l22 14M26 8L4 22" stroke="#3f85cf" fill="none"/><text x="15" y="21" text-anchor="middle" font-family="Liberation Sans" font-weight="700" font-size="15" textLength="22" lengthAdjust="spacingAndGlyphs" fill="#fff" stroke="#a8c8f0" stroke-width=".3">CAD</text></svg>`;

comp('task-bar', `
    <style>
        :host { display: flex; height: 40px; background: #21211f; flex: none; position: relative; overflow: hidden; }
        .tray { position: absolute; left: 0; top: 0; width: 1920px; height: 40px; pointer-events: none; }
        .clock { position: absolute; left: 1820px; width: 94px; top: 3px; text-align: center; font: 15px/21px "Open Sans", "Liberation Sans", sans-serif; color: #e6e6e6; white-space: nowrap; }
    </style>
    <task-cell><svg width="20" height="20" viewBox="0 0 20 20" style="margin-top:5px"><path fill="#fff" d="M0 3l8-1.200V9.500H0zM9 1.600L20 0v9.500H9zM0 10.500h8v7.700L0 17zM9 10.500h11V20L9 18.400z"/></svg></task-cell>
    <task-cell><svg width="20" height="28" viewBox="0 0 20 28" fill="none" stroke="#f0f0f0" stroke-width="1.500"><path d="M1 1v4h13V1M1 9h13v9H1zM1 27v-4h13v4"/><path d="M18 5v3M18 12v3M18 19v3" stroke-width="2"/></svg></task-cell>
    <task-cell><svg width="28" height="30" viewBox="0 0 28 30"><rect x="2" y="6" width="24" height="24" fill="#e8e8e8"/><path fill="#b01c22" d="M10 0L20 24 14 28 2 20z"/><path fill="#e03a3a" d="M10 0L13 26 2 20z"/><text x="21" y="13" font-family="Liberation Sans" font-weight="700" font-size="6" fill="#b01c22">20</text><text x="21" y="19" font-family="Liberation Sans" font-weight="700" font-size="6" fill="#b01c22">08</text></svg></task-cell>
    <task-cell><svg width="30" height="30" viewBox="0 0 30 30"><rect width="30" height="30" rx="3" fill="#ee5a24"/><rect x="3" y="3" width="24" height="14" fill="#f6ab88"/><path d="M5 17l6-10 5 6 5-7 5 11z" fill="#ee5a24"/><text x="15" y="28" text-anchor="middle" font-family="Liberation Sans" font-weight="700" font-size="11" fill="#fff">2017</text></svg></task-cell>
    <task-cell><svg width="30" height="30" viewBox="0 0 30 30"><rect width="30" height="30" rx="3" fill="#0ab40a"/><path d="M13 3h6l9 24H17l-3-8-5 8-5-5z" fill="#a8e8a8"/><path d="M15 10l4 8h-6z" fill="#0ab40a"/></svg></task-cell>
    <task-cell><svg width="28" height="30" viewBox="0 0 28 30"><path d="M0 3h10l3 3h15v22H0z" fill="#fbd776"/><path d="M0 3h10l3 3h-3L7 9H0z" fill="#e2ae3a"/><path d="M0 10h28" stroke="#f5c64d" stroke-width="2"/><rect x="7" y="18" width="14" height="12" fill="#2e9fe0"/><rect x="11" y="22" width="6" height="8" fill="#0f5f9a"/></svg></task-cell>
    <task-cell><svg width="30" height="30" viewBox="0 0 30 30" fill="none"><circle cx="15" cy="15" r="12" fill="#fff"/><circle cx="15" cy="15" r="12" stroke="#27a22b" stroke-width="3"/><path d="M8 15h14M9 15c0-9 13-8 13 0M10 20c4 4 9 3 12 0" stroke="#27a22b" stroke-width="2.500"/><path d="M3 26C7 14 18 4 28 1" stroke="#27a22b" stroke-width="1"/></svg></task-cell>
    <task-cell><svg width="30" height="30" viewBox="0 0 30 30"><rect width="30" height="30" rx="5" fill="#0d8fe8"/><rect x="4" y="3" width="22" height="25" rx="2" fill="#eaf5fd"/><path d="M8 9h14M8 13h14M8 17h7" stroke="#0d8fe8" stroke-width="1.800"/><circle cx="20" cy="20" r="4" fill="#fff" stroke="#0d8fe8" stroke-width="1.600"/></svg></task-cell>
    <task-cell><svg width="26" height="30" viewBox="0 0 26 30"><path d="M0 10h14v19H0z" fill="#ececec"/><path d="M3 15h8M3 19h8M3 23h8" stroke="#555"/><text x="18" y="20" text-anchor="middle" font-family="Liberation Sans" font-weight="700" font-size="24" fill="#ffd800">?</text></svg></task-cell>
    <task-cell>${cadLogo()}</task-cell>
    <task-cell>${cadLogo()}</task-cell>
    <task-cell><svg width="30" height="30" viewBox="0 0 30 30"><rect width="30" height="30" rx="6" fill="#22b673"/><path d="M10 6v18M10 15h9M19 11v8" stroke="#fff" stroke-width="2.500" fill="none"/></svg></task-cell>
    <task-cell on><svg width="30" height="30" viewBox="0 0 30 30"><ellipse cx="12" cy="12" rx="11" ry="10" fill="#7bc24c"/><path d="M6 19l-1 5 6-3z" fill="#7bc24c"/><circle cx="8" cy="10" r="1.500" fill="#3b6a22"/><circle cx="15" cy="10" r="1.500" fill="#3b6a22"/><ellipse cx="21" cy="20" rx="9" ry="8" fill="#fff"/><path d="M25 26l2 3-6-2z" fill="#fff"/><circle cx="18" cy="19" r="1.200" fill="#666"/><circle cx="24" cy="19" r="1.200" fill="#666"/></svg></task-cell>
    <svg class="tray" viewBox="0 1028 1920 40" fill="none" stroke="#f0f0f0" stroke-width="1.400">
        <circle cx="1594" cy="1055" r="3.500"/><path d="M1589 1062c0-3 2-4 5-4s5 1 5 4"/><circle cx="1602" cy="1049" r="3.500"/><path d="M1600 1053c3 0 6 1 7 5"/>
        <path d="M1636 1057l7-7 7 7"/>
        <path d="M1669 1049h15v11h-15zM1684 1052h2v5"/><rect x="1670" y="1050" width="9" height="9" fill="#f0f0f0"/><path d="M1664 1049h4M1666 1049v4"/>
        <path d="M1697 1061c1-7 6-12 14-13M1700 1061c1-5 5-9 11-9M1703 1061c1-3 3-5 7-5" stroke="#b8b8b8"/><circle cx="1709" cy="1060" r="1.200" fill="#f0f0f0"/>
        <path d="M1724 1052h3l5-4v14l-5-4h-3zM1735 1052l6 6M1741 1052l-6 6"/>
        <text x="1762" y="1060" text-anchor="middle" font-family="Liberation Sans" font-size="19" fill="#f4f4f4" stroke="none">A</text>
        <rect x="1788" y="1043" width="20" height="20" rx="2" fill="#2b7fe8" stroke="none"/>
        <path d="M1798 1047c3 0 4 2 4 4l1 6c-1 1-2 1-2 0-1 2-5 2-6 0 0 1-1 1-2 0l1-6c0-2 1-4 4-4z" fill="#fff" stroke="none"/>
        <path d="M1914.500 1028v40" stroke="#777" stroke-width="1"/>
    </svg>
    <div class="clock">10:01<br>2018/11/27</div>
`);

comp('app-window', `
    <style>
        :host { display: flex; flex-direction: column; width: 1920px; height: 1068px; overflow: hidden; position: relative; background: #000; }
    </style>
    <title-bar></title-bar>
    <tool-bar></tool-bar>
    <tab-strip></tab-strip>
    <cad-canvas></cad-canvas>
    <layout-tabs></layout-tabs>
    <status-bar></status-bar>
    <task-bar></task-bar>
`);
</script>
</body>
</html>
